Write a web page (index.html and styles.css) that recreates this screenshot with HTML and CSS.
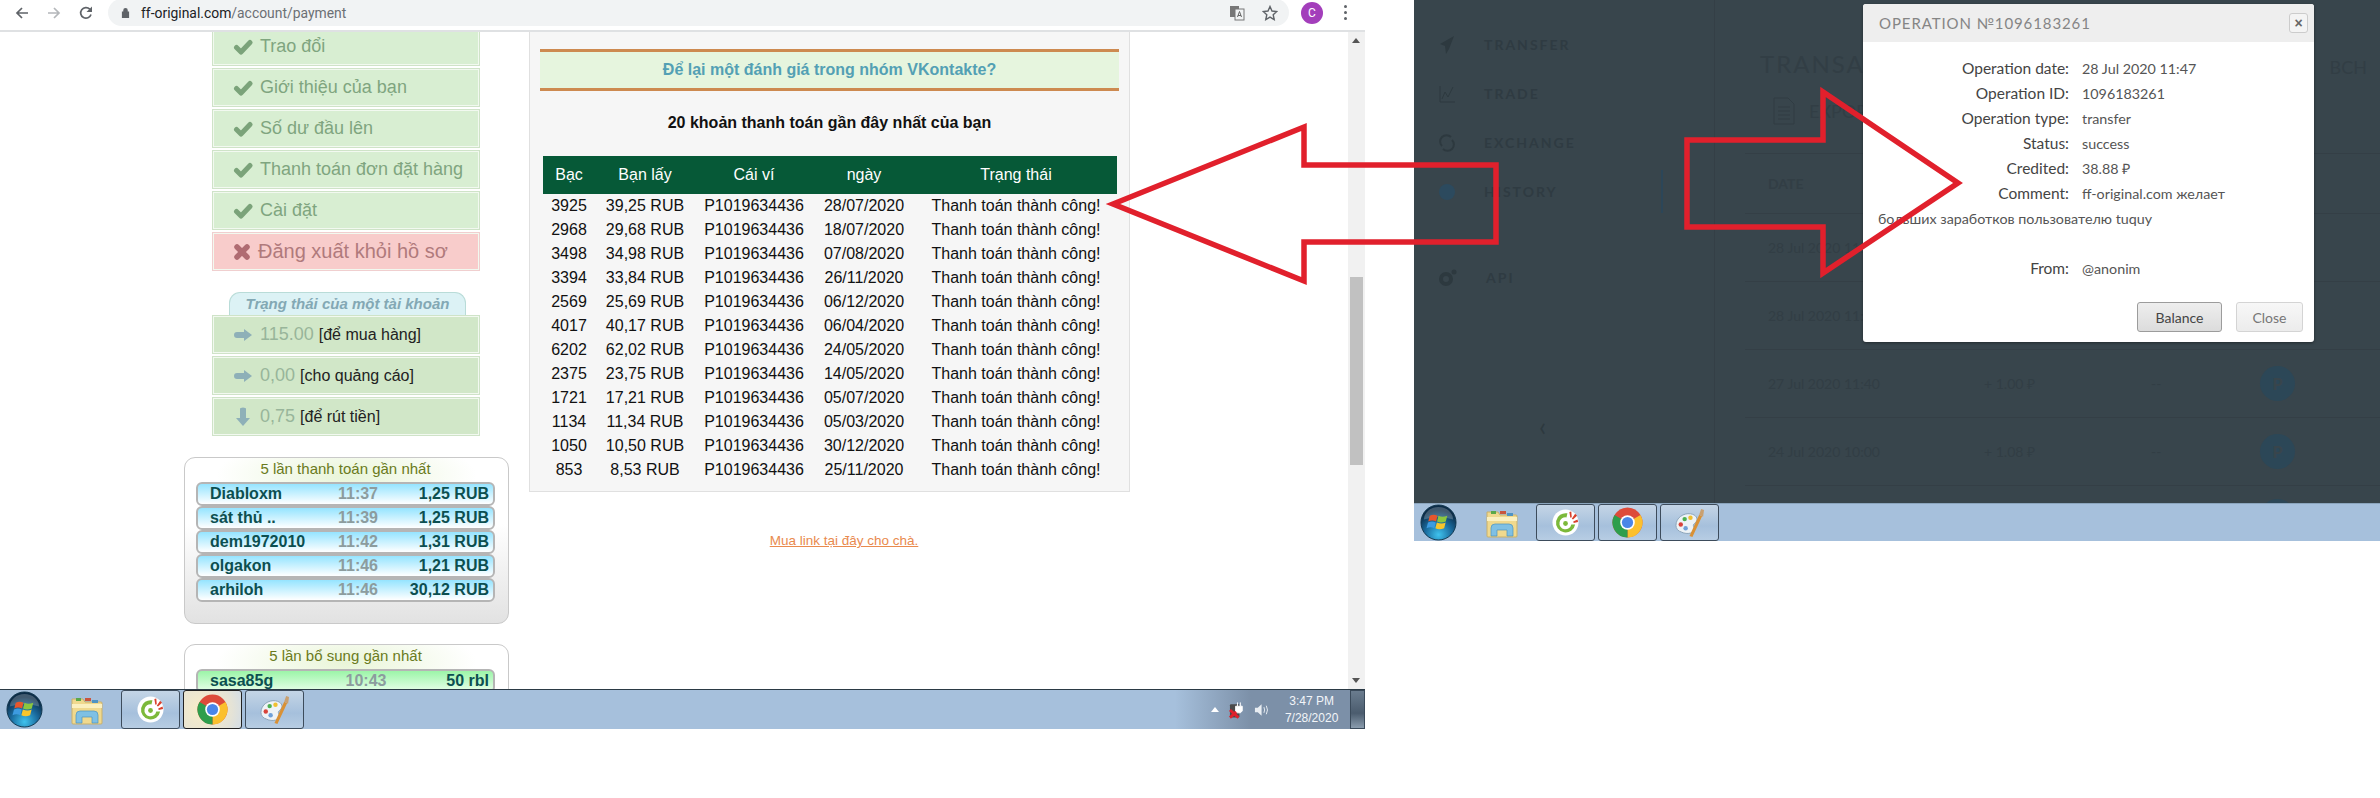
FILE: index.html
```html
<!DOCTYPE html>
<html lang="vi">
<head>
<meta charset="utf-8">
<title>ff-original.com/account/payment</title>
<link rel="stylesheet" href="styles.css">
</head>
<body>
<svg class="defs" width="0" height="0" aria-hidden="true">
  <symbol id="orb" viewBox="0 0 38 38">
    <defs>
      <radialGradient id="orbg" cx="50%" cy="85%" r="70%"><stop offset="0" stop-color="#3fc3ee"/><stop offset=".55" stop-color="#1a6b9e"/><stop offset="1" stop-color="#0c2c48"/></radialGradient>
    </defs>
    <circle cx="19" cy="19" r="18" fill="url(#orbg)" stroke="#12384f"/>
    <path d="M4 16a15 13 0 0 1 30 0q-15-5-30 0z" fill="#fff" opacity=".22"/>
    <path d="M10 12q4-2 8 0l-1.500 6q-4-2-8 0z" fill="#e8562c"/>
    <path d="M19 12q4 2 9 0l-1.500 6q-5 2-9 0z" fill="#8cc63f"/>
    <path d="M8.200 19q4-2 8 0l-1.500 6q-4-2-8 0z" fill="#3d9be0"/>
    <path d="M17.300 19q5 2 9 0l-1.500 6q-5 2-9 0z" fill="#f8c52c"/>
  </symbol>
  <symbol id="folder" viewBox="0 0 32 30">
    <path d="M1 4h11l2 3h16a1 1 0 0 1 1 1v20a1 1 0 0 1-1 1H2a1 1 0 0 1-1-1z" fill="#f0d98e" stroke="#c9b06a"/>
    <path d="M1 9h30v4H1z" fill="#fbf0c0"/>
    <rect x="5" y="3" width="5" height="3" fill="#5aa84a"/><rect x="14" y="3" width="6" height="3" fill="#c9553e"/><rect x="21" y="5" width="6" height="3" fill="#4f94c4"/>
    <path d="M5 28v-8q0-4 4-4h14q4 0 4 4v8h-6v-6H11v6z" fill="#7fc0e4" stroke="#4d93bd" stroke-width=".7"/>
  </symbol>
  <symbol id="coccoc" viewBox="0 0 28 28">
    <circle cx="14" cy="14" r="13.500" fill="#fff"/>
    <path d="M16 4.500A10 10 0 1 0 24 16h-4a6.200 6.200 0 1 1-5-7.300z" fill="#7cb93a"/>
    <circle cx="14" cy="15" r="2.500" fill="#7cb93a"/>
    <path d="M18 3l1 6 1.500-.5L20 2.500zM24 5l-3.500 5 1.300.8L26 7zM26.500 11l-4.500 2 .5 1.400 4.500-1z" fill="#d9412c"/>
  </symbol>
  <symbol id="chrome" viewBox="0 0 32 32">
    <circle cx="16" cy="16" r="15.500" fill="#dd4b3a"/>
    <path d="M16 16L29.400 8.200A15.500 15.500 0 0 1 16 31.500z" fill="#fbc02d"/>
    <path d="M16 16L16 31.500A15.500 15.500 0 0 1 2.600 8.200z" fill="#2e9e4c"/>
    <circle cx="16" cy="16" r="7.500" fill="#fff"/><circle cx="16" cy="16" r="5.800" fill="#4a86e8"/>
  </symbol>
  <symbol id="paint" viewBox="0 0 32 32">
    <path d="M2 19C2 11 10 6 17 7c6 1 8 5 6 8-1 2-3 2-3 4s2 3 1 5c-2 4-9 4-13 2-4-1-6-4-6-7z" fill="#eef3f6" stroke="#8aa3b8"/>
    <circle cx="7" cy="18" r="2.300" fill="#d8433a"/><circle cx="11" cy="12.500" r="2.300" fill="#4caf50"/><circle cx="17" cy="11" r="2.300" fill="#f0c030"/><circle cx="12" cy="22" r="2.300" fill="#6fa0d8"/>
    <path d="M16 30L26 8l3 1.500L19 31z" fill="#d99135"/><path d="M26 8l2-6 3 1-1 7z" fill="#c9a070"/>
  </symbol>
  <symbol id="check" viewBox="0 0 20 16"><path d="M3.500 8.500l4.500 4.500L17 3.500" fill="none" stroke="currentColor" stroke-width="5" stroke-linecap="round" stroke-linejoin="round"/></symbol>
  <symbol id="cross" viewBox="0 0 18 18"><path d="M4 4l10 10M14 4L4 14" fill="none" stroke="currentColor" stroke-width="5.500" stroke-linecap="round"/></symbol>
  <symbol id="arrow-r" viewBox="0 0 20 14"><path d="M1 7q0-3 3-3h7V1l8 6-8 6v-3H4q-3 0-3-3z" fill="currentColor"/></symbol>
  <symbol id="arrow-d" viewBox="0 0 16 20"><path d="M5 2q0-1.500 3-1.500t3 1.500v9h4l-7 8-7-8h4z" fill="currentColor"/></symbol>
</svg>

<div class="stage">
  <section class="shot shot-browser">
    <header class="toolbar">
      <svg class="tb-icon" viewBox="0 0 16 16" width="16" height="16"><path d="M14 8H3M8 3L3 8l5 5" fill="none" stroke="#5f6368" stroke-width="1.700"/></svg>
      <svg class="tb-icon" viewBox="0 0 16 16" width="16" height="16"><path d="M2 8h11M8 3l5 5-5 5" fill="none" stroke="#b4b7ba" stroke-width="1.700"/></svg>
      <svg class="tb-icon" viewBox="0 0 16 16" width="16" height="16"><path d="M13 9.500A5.300 5.300 0 1 1 11.800 4.200" fill="none" stroke="#5f6368" stroke-width="1.700"/><path d="M14 1.500v5.500H8.500z" fill="#5f6368"/></svg>
      <div class="omnibox">
        <svg class="lock" viewBox="0 0 10 12" width="9" height="11"><path d="M2.500 5V3.500a2.500 2.500 0 0 1 5 0V5h1.500v7H1V5z" fill="#5f6368"/></svg>
        <span class="url"><b>ff-original.com</b>/account/payment</span>
        <svg class="omni-icon" viewBox="0 0 16 16" width="16" height="18"><rect x="1" y="1" width="9" height="11" fill="#777"/><rect x="6" y="4" width="9" height="11" fill="#f1f3f4" stroke="#777"/><path d="M8.500 12l2-5.500 2 5.500M9 10.500h3" stroke="#666" fill="none"/></svg>
        <svg class="omni-icon" viewBox="0 0 16 16" width="16" height="16"><path d="M8 1.500l2 4.500 4.800.5-3.600 3.200 1 4.800L8 12.100 3.800 14.500l1-4.800L1.200 6.500 6 6z" fill="none" stroke="#5f6368" stroke-width="1.400"/></svg>
      </div>
      <span class="avatar">C</span>
      <span class="kebab"><i></i><i></i><i></i></span>
    </header>

    <div class="viewport">
      <aside class="sidebar">
        <nav class="menu">
          <a class="tile"><svg class="ic" width="20" height="16"><use href="#check"/></svg>Trao đổi</a>
          <a class="tile"><svg class="ic" width="20" height="16"><use href="#check"/></svg>Giới thiệu của bạn</a>
          <a class="tile"><svg class="ic" width="20" height="16"><use href="#check"/></svg>Số dư đầu lên</a>
          <a class="tile"><svg class="ic" width="20" height="16"><use href="#check"/></svg>Thanh toán đơn đặt hàng</a>
          <a class="tile"><svg class="ic" width="20" height="16"><use href="#check"/></svg>Cài đặt</a>
          <a class="tile tile-out"><svg class="ic" width="18" height="18"><use href="#cross"/></svg>Đăng xuất khỏi hồ sơ</a>
        </nav>
        <div class="state-tab">Trạng thái của một tài khoản</div>
        <div class="state">
          <div class="tile tile-state"><svg class="ic ic-state" width="20" height="14"><use href="#arrow-r"/></svg><em>115.00</em> <span>[để mua hàng]</span></div>
          <div class="tile tile-state"><svg class="ic ic-state" width="20" height="14"><use href="#arrow-r"/></svg><em>0,00</em> <span>[cho quảng cáo]</span></div>
          <div class="tile tile-state"><svg class="ic ic-state" width="20" height="20"><use href="#arrow-d"/></svg><em>0,75</em> <span>[để rút tiền]</span></div>
        </div>
        <div class="feed">
          <h4>5 lần thanh toán gần nhất</h4>
          <div class="feed-row"><b>Diabloxm</b><i>11:37</i><b>1,25 RUB</b></div>
          <div class="feed-row"><b>sát thủ ..</b><i>11:39</i><b>1,25 RUB</b></div>
          <div class="feed-row"><b>dem1972010</b><i>11:42</i><b>1,31 RUB</b></div>
          <div class="feed-row"><b>olgakon</b><i>11:46</i><b>1,21 RUB</b></div>
          <div class="feed-row"><b>arhiloh</b><i>11:46</i><b>30,12 RUB</b></div>
        </div>
        <div class="feed feed-in">
          <h4>5 lần bổ sung gần nhất</h4>
          <div class="feed-row"><b>sasa85g</b><i>10:43</i><b>50 rbl</b></div>
        </div>
      </aside>

      <main class="center">
        <div class="panel">
          <div class="banner">Để lại một đánh giá trong nhóm VKontakte?</div>
          <h3 class="pay-title">20 khoản thanh toán gần đây nhất của bạn</h3>
          <table class="pay">
            <colgroup><col class="c1"><col class="c2"><col class="c3"><col class="c4"><col class="c5"></colgroup>
            <thead><tr><th>Bạc</th><th>Bạn lấy</th><th>Cái ví</th><th>ngày</th><th>Trạng thái</th></tr></thead>
            <tbody>
              <tr><td>3925</td><td>39,25 RUB</td><td>P1019634436</td><td>28/07/2020</td><td>Thanh toán thành công!</td></tr>
              <tr><td>2968</td><td>29,68 RUB</td><td>P1019634436</td><td>18/07/2020</td><td>Thanh toán thành công!</td></tr>
              <tr><td>3498</td><td>34,98 RUB</td><td>P1019634436</td><td>07/08/2020</td><td>Thanh toán thành công!</td></tr>
              <tr><td>3394</td><td>33,84 RUB</td><td>P1019634436</td><td>26/11/2020</td><td>Thanh toán thành công!</td></tr>
              <tr><td>2569</td><td>25,69 RUB</td><td>P1019634436</td><td>06/12/2020</td><td>Thanh toán thành công!</td></tr>
              <tr><td>4017</td><td>40,17 RUB</td><td>P1019634436</td><td>06/04/2020</td><td>Thanh toán thành công!</td></tr>
              <tr><td>6202</td><td>62,02 RUB</td><td>P1019634436</td><td>24/05/2020</td><td>Thanh toán thành công!</td></tr>
              <tr><td>2375</td><td>23,75 RUB</td><td>P1019634436</td><td>14/05/2020</td><td>Thanh toán thành công!</td></tr>
              <tr><td>1721</td><td>17,21 RUB</td><td>P1019634436</td><td>05/07/2020</td><td>Thanh toán thành công!</td></tr>
              <tr><td>1134</td><td>11,34 RUB</td><td>P1019634436</td><td>05/03/2020</td><td>Thanh toán thành công!</td></tr>
              <tr><td>1050</td><td>10,50 RUB</td><td>P1019634436</td><td>30/12/2020</td><td>Thanh toán thành công!</td></tr>
              <tr><td>853</td><td>8,53 RUB</td><td>P1019634436</td><td>25/11/2020</td><td>Thanh toán thành công!</td></tr>
            </tbody>
          </table>
        </div>
        <p class="buy"><a>Mua link tại đây cho chà.</a></p>
      </main>

      <div class="scrollbar">
        <span class="sb-up"></span>
        <span class="sb-thumb"></span>
        <span class="sb-down"></span>
      </div>
    </div>

    <footer class="taskbar">
      <svg class="orb" width="37" height="37"><use href="#orb"/></svg>
      <svg class="folder" width="32" height="30"><use href="#folder"/></svg>
      <span class="tk"><svg width="27" height="27"><use href="#coccoc"/></svg></span>
      <span class="tk tk-on"><svg width="31" height="31"><use href="#chrome"/></svg></span>
      <span class="tk"><svg width="31" height="31"><use href="#paint"/></svg></span>
      <div class="tray">
        <span class="tray-up"></span>
        <svg width="16" height="18" viewBox="0 0 16 18"><rect x="1" y="3" width="10" height="14" rx="1" fill="#4a4a4a"/><path d="M1 9l9 8M10 9l-9 8" stroke="#e0202c" stroke-width="3"/><path d="M7 5h7v5l-2 2H9L7 10zM9 1v4M12 1v4" fill="#fff" stroke="#fff"/></svg>
        <svg width="17" height="14" viewBox="0 0 17 14"><path d="M1 4.500h3L8 1v12L4 9.500H1z" fill="#e8edf2"/><path d="M10.500 4q1.500 3 0 6M13 2.500q2.500 4.500 0 9" fill="none" stroke="#e8edf2"/></svg>
        <div class="clock">3:47 PM<br>7/28/2020</div>
        <span class="show-desktop"></span>
      </div>
    </footer>
  </section>

  <section class="shot shot-wallet">
    <div class="dim">
      <nav class="dim-nav">
        <div class="dim-item"><svg width="16" height="20" viewBox="0 0 16 20"><path d="M15 1L1 9l5 2 1 8 3-5z" fill="#2d393f"/></svg>TRANSFER</div>
        <div class="dim-item"><svg width="16" height="20" viewBox="0 0 16 20"><path d="M1 2v16h15M3 15l3-7 3 5 5-10" fill="none" stroke="#2d393f"/></svg>TRADE</div>
        <div class="dim-item"><svg width="16" height="20" viewBox="0 0 16 20"><path d="M3 13A6 6 0 0 1 12 4M13 7a6 6 0 0 1-9 9" fill="none" stroke="#2d393f" stroke-width="2"/></svg>EXCHANGE</div>
        <div class="dim-item"><svg width="16" height="20" viewBox="0 0 16 20"><circle cx="8" cy="10" r="8" fill="#2c4a5e"/></svg>HISTORY</div>
        <div class="dim-item dim-api"><svg width="18" height="20" viewBox="0 0 18 20"><circle cx="7" cy="11" r="5" fill="none" stroke="#2d393f" stroke-width="4"/><circle cx="15" cy="4" r="2.500" fill="#2d393f"/></svg>API</div>
        <div class="dim-chev">‹</div>
      </nav>
      <div class="dim-rule"></div>
      <div class="dim-main">
        <div class="dim-head"><h2>TRANSACTIONS</h2><span>BCH</span></div>
        <div class="dim-export"><svg width="22" height="28" viewBox="0 0 22 28"><path d="M1 1h14l6 6v20H1zM5 10h12M5 14h12M5 18h12M5 22h12" fill="none" stroke="#303c43"/></svg>EXPORT</div>
        <div class="dim-row dim-th"><span>DATE</span></div>
        <div class="dim-row"><span>28 Jul 2020 11:47</span></div>
        <div class="dim-row"><span>28 Jul 2020 11:03</span></div>
        <div class="dim-row"><span>27 Jul 2020 11:40</span><span class="amt">+ 1.00 ₽</span><span class="dash">--</span><span class="coin">P</span></div>
        <div class="dim-row"><span>24 Jul 2020 10:00</span><span class="amt">+ 1.08 ₽</span><span class="dash">--</span><span class="coin">P</span></div>
        <div class="dim-row dim-tail"><span class="coin coin-last"></span></div>
      </div>
    </div>

    <div class="modal">
      <div class="modal-head"><span>OPERATION №1096183261</span><button class="modal-x">×</button></div>
      <div class="modal-body">
        <p><label>Operation date:</label>28 Jul 2020 11:47</p>
        <p><label>Operation ID:</label>1096183261</p>
        <p><label>Operation type:</label>transfer</p>
        <p><label>Status:</label>success</p>
        <p><label>Credited:</label>38.88 ₽</p>
        <p class="comment"><label>Comment:</label>ff-original.com желает<br>больших заработков пользователю tuquy</p>
        <p class="blank"></p>
        <p><label>From:</label>@anonim</p>
      </div>
      <div class="modal-foot"><button class="btn btn-main">Balance</button><button class="btn">Close</button></div>
    </div>

    <footer class="taskbar taskbar-short">
      <svg class="orb" width="37" height="37"><use href="#orb"/></svg>
      <svg class="folder" width="32" height="30"><use href="#folder"/></svg>
      <span class="tk"><svg width="27" height="27"><use href="#coccoc"/></svg></span>
      <span class="tk"><svg width="31" height="31"><use href="#chrome"/></svg></span>
      <span class="tk"><svg width="31" height="31"><use href="#paint"/></svg></span>
    </footer>
  </section>

  <svg class="overlay" width="2380" height="798" viewBox="0 0 2380 798" aria-hidden="true">
    <path d="M1113 204L1304 127V165H1496V242H1304V281z"/>
    <path d="M1687 140H1823V92L1958 183L1823 273V227H1687z"/>
  </svg>
</div>
</body>
</html>
```
FILE: styles.css
```css
* { box-sizing: border-box; }
html, body { margin: 0; padding: 0; background: #fff; }
body { font-family: "Liberation Sans", Arial, sans-serif; overflow: hidden; }
.defs { display: block; height: 0; }

.stage { position: relative; display: flex; gap: 49px; align-items: flex-start; width: 2380px; height: 798px; }
.overlay { position: absolute; left: 0; top: 0; pointer-events: none; }
.overlay path { fill: none; stroke: #e1202c; stroke-width: 5.500; stroke-linejoin: miter; }

.shot { display: flex; flex-direction: column; overflow: hidden; }
.shot-browser { width: 1365px; height: 729px; flex: none; }
.shot-wallet { position: relative; flex: 1; height: 541px; }

/* browser toolbar */
.toolbar { display: flex; align-items: center; height: 32px; padding: 0 0 5px 14px; background: #fff; border-bottom: 2px solid #dfe1e3; flex: none; }
.tb-icon { margin-right: 16px; }
.omnibox { display: flex; align-items: center; width: 1181px; height: 27px; margin: 0 0 0 -2px; padding: 0 11px 0 13px; border-radius: 14px; background: #f1f3f4; }
.lock { margin-right: 11px; }
.url { flex: 1; font: 13.900px "Roboto", sans-serif; color: #6c7074; }
.url b { font-weight: 400; color: #202124; }
.omni-icon { margin-left: 17px; }
.avatar { display: block; width: 22px; height: 22px; margin-left: 12px; border-radius: 50%; background: #a33ebb; color: #fff; font: 12px/22px "Roboto", sans-serif; text-align: center; }
.kebab { display: flex; flex-direction: column; gap: 3px; margin-left: 21px; }
.kebab i { display: block; width: 3px; height: 3px; border-radius: 50%; background: #5f6368; }

/* page */
.viewport { display: flex; flex: 1; min-height: 0; overflow: hidden; padding-left: 184px; background: #fff; }
.sidebar { width: 325px; flex: none; margin-top: -5px; }
.menu { margin-left: 28px; width: 268px; display: flex; flex-direction: column; gap: 2px; }
.tile { display: flex; align-items: center; height: 39px; padding-left: 20px; font-size: 18px; color: #7fa57f; background: #d8eed2; border: 1px solid #cfe3c8; outline: 1px solid #f2f9f0; outline-offset: -2px; white-space: pre; }
.ic { flex: none; margin-right: 7px; color: #7ba37a; }
.tile-out { color: #b07a7c; background: #f8cccb; border-color: #f0cfcf; font-size: 20px; }
.tile-out .ic { color: #b06c72; }

.state-tab { width: 237px; height: 23px; margin: 21px 0 0 45px; border: 1px solid #b9dcd8; border-bottom: 0; border-radius: 11px 11px 0 0; background: #dcf2f5; color: #83a8b4; font: italic bold 15px/21px "Liberation Sans", sans-serif; text-align: center; white-space: nowrap; }
.state { margin-left: 28px; width: 268px; display: flex; flex-direction: column; gap: 2px; }
.tile-state { background: #d1e7c8; color: #222; font-size: 16px; }
.tile-state em { font-style: normal; font-size: 18px; color: #98b59a; margin-right: 5px; }
.ic-state { color: #8eb0b8; }

.feed { height: 167px; margin-top: 21px; padding: 0 13px 0 11px; border: 1px solid #c9c9c9; border-radius: 11px; background: radial-gradient(ellipse 130px 40px at 50% 18px, #e9f5d8, rgba(255,255,255,0) 100%), linear-gradient(#fff, #fff 40%, #e2e2e2); }
.feed h4 { margin: 0; height: 24px; font: 400 15px/21px "Liberation Sans", sans-serif; color: #6a7a20; text-align: center; }
.feed-row { display: grid; grid-template-columns: 108px 80px 91px; align-items: center; height: 24px; padding: 0 4px 0 12px; border: 2px solid #b5b5b5; border-radius: 6px; background: linear-gradient(#95e4ff, #fff); font-size: 16px; color: #0c4f50; }
.feed-row i { font-style: normal; font-weight: 700; color: #8c9c9e; text-align: center; }
.feed-row b:last-child { text-align: right; white-space: nowrap; }
.feed-in { margin-top: 20px; }
.feed-in .feed-row { grid-template-columns: 116px 80px 83px; background: linear-gradient(#9cf5a8, #e6ffe8); }

.center { flex: none; width: 601px; margin-left: 20px; }
.panel { height: 460px; padding: 17px 10px 0; border: 1px solid #e0e0e0; border-top: 0; background: #f6f6f6; }
.banner { height: 42px; border-top: 3px solid #cd8a50; border-bottom: 3px solid #cd8a50; background: #e6f5de; color: #53a0b4; font-weight: 700; font-size: 16px; line-height: 36px; text-align: center; }
.pay-title { margin: 21px 0 0; font-size: 16px; line-height: 22px; color: #111; text-align: center; }
.pay { width: 574px; margin: 22px 0 0 3px; border-collapse: collapse; table-layout: fixed; font-size: 16px; color: #111; }
.c1 { width: 52px; } .c2 { width: 100px; } .c3 { width: 118px; } .c4 { width: 102px; } .c5 { width: 202px; }
.pay th { height: 38px; padding: 0; background: #065937; color: #fff; font-weight: 400; }
.pay td { height: 24px; padding: 0; text-align: center; white-space: nowrap; }
.buy { margin: 40px 0 0; padding-left: 29px; font-size: 13.500px; line-height: 18px; text-align: center; }
.buy a { color: #e98a4e; text-decoration: underline; }

.scrollbar { display: flex; flex-direction: column; flex: none; width: 17px; margin-left: auto; background: #f1f1f1; }
.sb-up, .sb-down { flex: none; width: 0; height: 0; margin: 6px 4px; border: 4px solid transparent; border-left-width: 4px; }
.sb-up { border-top: 0; border-bottom: 5px solid #555; }
.sb-down { border-bottom: 0; border-top: 5px solid #555; margin-top: auto; margin-bottom: 6px; }
.sb-thumb { flex: none; height: 188px; margin: 228px 2px 0; background: #c1c1c1; }

/* taskbar */
.taskbar { display: flex; align-items: center; height: 40px; flex: none; background: #a6c0dc; border-top: 1px solid #2b3a45; }
.taskbar-short { height: 38px; border-top-color: #8ba5bd; }
.orb { flex: none; margin: 0 6px; }
.folder { flex: none; margin: 0 18px 0 22px; }
.taskbar-short .orb { margin-right: 7px; }
.tk { display: flex; align-items: center; justify-content: center; width: 59px; height: 100%; margin-right: 3px; border: 1px solid #3d4c5c; border-radius: 3px; background: linear-gradient(#c4d5e6, #a6c0dc 60%, #b7cde3); }
.tk-on { background: radial-gradient(circle at 30% 50%, #f8edc8, #e5e3d6 70%, #d3dde6); border-color: #222; }
.tray { display: flex; align-items: center; gap: 10px; margin-left: auto; width: 190px; height: 100%; padding-left: 36px; background: linear-gradient(90deg, #a6c0dc, #7c90a8 40%); }
.tray-up { width: 0; height: 0; border: 4px solid transparent; border-top: 0; border-bottom: 5px solid #fff; }
.clock { width: 60px; margin-left: 3px; font: 12px/17px "Liberation Sans", sans-serif; color: #f2f5f8; text-align: center; }
.show-desktop { width: 15px; height: 100%; margin-left: auto; flex: none; border: 1px solid #3a4a5a; background: linear-gradient(#6a7c8e, #4b5c6e 60%, #8a9cad); }

/* dimmed wallet */
.dim { display: flex; flex: 1; min-height: 0; overflow: hidden; background: #38454c; color: #2f3b42; font-family: "Lato", sans-serif; }
.dim-nav { position: relative; width: 248px; flex: none; padding: 20px 0 0 25px; }
.dim-item { display: flex; align-items: center; gap: 29px; height: 49px; font-size: 14px; font-weight: 700; letter-spacing: 2px; }
.dim-api { margin-top: 37px; }
.dim-chev { position: absolute; left: 125px; top: 410px; font-size: 26px; color: #2d393f; }
.dim-rule { width: 2px; height: 43px; margin: 170px 0 0 -1px; background: #2c4658; flex: none; }
.dim-main { flex: 1; margin-left: 51px; padding-left: 30px; border-left: 1px solid #343f46; color: #323e45; font-size: 14px; }
.dim-head { display: flex; justify-content: space-between; height: 88px; padding: 48px 0 0 15px; }
.dim-head h2 { margin: 0; font: 400 24px/32px "Lato", sans-serif; letter-spacing: 2px; }
.dim-head span { margin: 8px 13px 0 0; font-size: 18px; }
.dim-export { display: flex; align-items: center; gap: 14px; height: 65px; padding: 0 0 20px 28px; font-size: 18px; }
.dim-row { position: relative; display: flex; align-items: center; height: 68px; padding-left: 23px; border-top: 1px solid #343f46; }
.dim-th { height: 60px; font-weight: 700; }
.dim-tail { height: 20px; }
.amt { position: absolute; left: 239px; }
.dash { position: absolute; left: 406px; }
.coin { position: absolute; left: 515px; width: 35px; height: 35px; border-radius: 50%; background: #2c4757; color: #38454c; font-weight: 900; font-size: 16px; line-height: 35px; text-align: center; }
.coin-last { top: 13px; }

/* modal */
.modal { position: absolute; left: 449px; top: 4px; width: 451px; height: 338px; display: flex; flex-direction: column; border-radius: 3px; background: #fff; box-shadow: 0 1px 3px rgba(0,0,0,.4); font-family: "Lato", sans-serif; color: #555; }
.modal-head { display: flex; align-items: center; justify-content: space-between; height: 38px; padding: 0 6px 0 16px; flex: none; border-radius: 3px 3px 0 0; background: #eee; color: #858585; font-size: 15px; letter-spacing: .9px; }
.modal-x { width: 19px; height: 20px; padding: 0; border: 1px solid #ccc; border-radius: 3px; background: #f4f4f4; color: #666; font: 700 14px/16px "Liberation Sans", sans-serif; }
.modal-body { padding: 14px 30px 0 15px; font-size: 14.300px; line-height: 25px; flex: 1; }
.modal-body p { margin: 0; min-height: 25px; white-space: nowrap; }
.modal-body label { display: inline-block; width: 191px; margin-right: 13px; color: #444; font-size: 15.500px; text-align: right; }
.modal-foot { display: flex; justify-content: flex-end; gap: 14px; padding: 0 11px 10px 0; }
.btn { width: 67px; height: 30px; padding: 0; border: 1px solid #d4d4d4; border-radius: 3px; background: linear-gradient(#f7f7f7, #ececec); color: #777; font: 14px "Lato", sans-serif; }
.btn-main { width: 85px; border-color: #9c9c9c; background: linear-gradient(#eee, #dcdcdc); color: #444; }
```
